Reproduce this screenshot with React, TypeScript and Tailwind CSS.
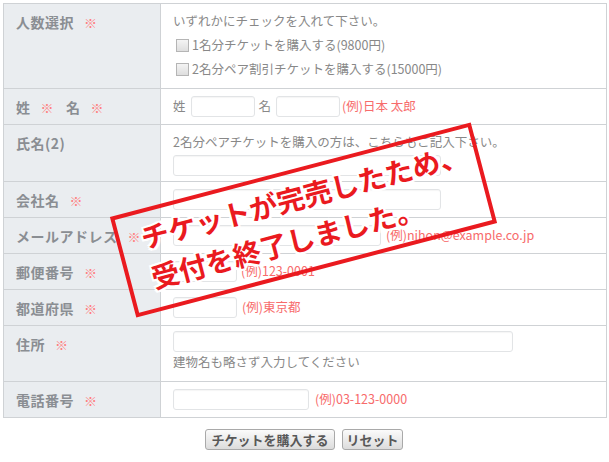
import React from "react";

const Req = () => (
  <span className="ml-[10px] text-[13px] font-normal text-[#ff7f7f]">※</span>
);

const Input = ({ w }: { w: string }) => (
  <span
    className={`inline-block h-[21px] ${w} rounded-[3px] border border-[#e2e4e6] bg-white shadow-[inset_0_1px_1px_rgba(0,0,0,0.04)]`}
  />
);

const Ex = ({ children, cls = "ml-[5px]" }: { children: React.ReactNode; cls?: string }) => (
  <span className={`${cls} text-[#f76b6b]`}>{children}</span>
);

const Check = () => (
  <span className="inline-block h-[13px] w-[13px] border border-[#b5b5b5] bg-gradient-to-b from-[#f4f4f4] to-[#dedede] mr-[3px]" />
);

const Label = ({ children, h }: { children: React.ReactNode; h: string }) => (
  <div className={`${h} bg-[#eaedf0] pl-[12px] pt-[8px] text-[14px] leading-[20px] font-bold text-[#8a8e93] tracking-[0.5px]`}>
    {children}
  </div>
);

const Cell = ({ children, h, cls = "" }: { children: React.ReactNode; h: string; cls?: string }) => (
  <div className={`${h} bg-white pl-[12px] text-[12.5px] text-[#888] ${cls}`}>{children}</div>
);

export default function App() {
  return (
    <div className="relative w-[609px] h-[462px] bg-white [font-family:'Noto_Sans_CJK_JP',sans-serif]">
      <div className="ml-[3px] pt-[3px]">
        <div className="grid w-[604px] grid-cols-[156px_445px] gap-px border border-[#cfd2d5] bg-[#cfd2d5]">
          {/* Row 1 */}
          <Label h="h-[84px]">
            人数選択<Req />
          </Label>
          <Cell h="h-[84px]" cls="pt-[7px]">
            <div className="h-[20px] leading-[20px]">いずれかにチェックを入れて下さい。</div>
            <div className="mt-[2px] flex h-[24px] items-center pl-[3px]">
              <Check />
              1名分チケットを購入する(9800円)
            </div>
            <div className="flex h-[24px] items-center pl-[3px]">
              <Check />
              2名分ペア割引チケットを購入する(15000円)
            </div>
          </Cell>

          {/* Row 2 */}
          <Label h="h-[35px]">
            姓<Req />
            <span className="ml-[12px]">名</span>
            <Req />
          </Label>
          <Cell h="h-[35px]" cls="flex items-center">
            <span>姓</span>
            <span className="ml-[5px] flex">
              <Input w="w-[64px]" />
            </span>
            <span className="ml-[4px]">名</span>
            <span className="ml-[5px] flex">
              <Input w="w-[64px]" />
            </span>
            <Ex cls="ml-[2px]">(例)日本 太郎</Ex>
          </Cell>

          {/* Row 3 */}
          <Label h="h-[56px]">氏名(2)</Label>
          <Cell h="h-[56px]" cls="pt-[7px]">
            <div className="h-[20px] leading-[20px]">2名分ペアチケットを購入の方は、こちらもご記入下さい。</div>
            <div className="mt-[3px] flex">
              <Input w="w-[268px]" />
            </div>
          </Cell>

          {/* Row 4 */}
          <Label h="h-[35px]">
            会社名<Req />
          </Label>
          <Cell h="h-[35px]" cls="flex items-center">
            <Input w="w-[268px]" />
          </Cell>

          {/* Row 5 */}
          <Label h="h-[35px]">
            メールアドレス<Req />
          </Label>
          <Cell h="h-[35px]" cls="flex items-center">
            <Input w="w-[208px]" />
            <Ex>(例)nihon@example.co.jp</Ex>
          </Cell>

          {/* Row 6 */}
          <Label h="h-[35px]">
            郵便番号<Req />
          </Label>
          <Cell h="h-[35px]" cls="flex items-center">
            <Input w="w-[64px]" />
            <Ex cls="ml-[4px]">(例)123-0001</Ex>
          </Cell>

          {/* Row 7 */}
          <Label h="h-[35px]">
            都道府県<Req />
          </Label>
          <Cell h="h-[35px]" cls="flex items-center">
            <Input w="w-[64px]" />
            <Ex>(例)東京都</Ex>
          </Cell>

          {/* Row 8 */}
          <Label h="h-[55px]">
            住所<Req />
          </Label>
          <Cell h="h-[55px]" cls="pt-[5px]">
            <div className="flex">
              <Input w="w-[340px]" />
            </div>
            <div className="h-[20px] leading-[20px]">建物名も略さず入力してください</div>
          </Cell>

          {/* Row 9 */}
          <Label h="h-[35px]">
            電話番号<Req />
          </Label>
          <Cell h="h-[35px]" cls="flex items-center">
            <Input w="w-[136px]" />
            <Ex cls="ml-[6px]">(例)03-123-0000</Ex>
          </Cell>
        </div>
      </div>

      <div className="mt-[11px] flex justify-center gap-[7px] pr-[1px]">
        <button className="h-[21px] w-[130px] rounded-[3px] border border-[#a9a9a9] bg-gradient-to-b from-[#fbfbfb] to-[#dcdcdc] text-[13px] font-bold leading-[19px] text-[#585858]">
          チケットを購入する
        </button>
        <button className="h-[21px] w-[61px] rounded-[3px] border border-[#a9a9a9] bg-gradient-to-b from-[#fbfbfb] to-[#dcdcdc] text-[13px] font-bold leading-[19px] text-[#585858]">
          リセット
        </button>
      </div>

      {/* Sold-out stamp */}
      <div className="absolute left-[117px] top-[168px] h-[104px] w-[373px] -rotate-[14.7deg] border-4 border-[#ea1a1f] pl-[21px] pt-[4px]">
        <div className="whitespace-nowrap text-[28px] font-bold leading-[41px] text-[#ea1a1f] [text-shadow:2px_0_0_#fff,-2px_0_0_#fff,0_2px_0_#fff,0_-2px_0_#fff,2px_2px_0_#fff,-2px_-2px_0_#fff,2px_-2px_0_#fff,-2px_2px_0_#fff]">
          チケットが完売したため、
        </div>
        <div className="whitespace-nowrap text-[28px] font-bold leading-[41px] text-[#ea1a1f] [text-shadow:2px_0_0_#fff,-2px_0_0_#fff,0_2px_0_#fff,0_-2px_0_#fff,2px_2px_0_#fff,-2px_-2px_0_#fff,2px_-2px_0_#fff,-2px_2px_0_#fff]">
          受付を終了しました。
        </div>
      </div>
    </div>
  );
}
